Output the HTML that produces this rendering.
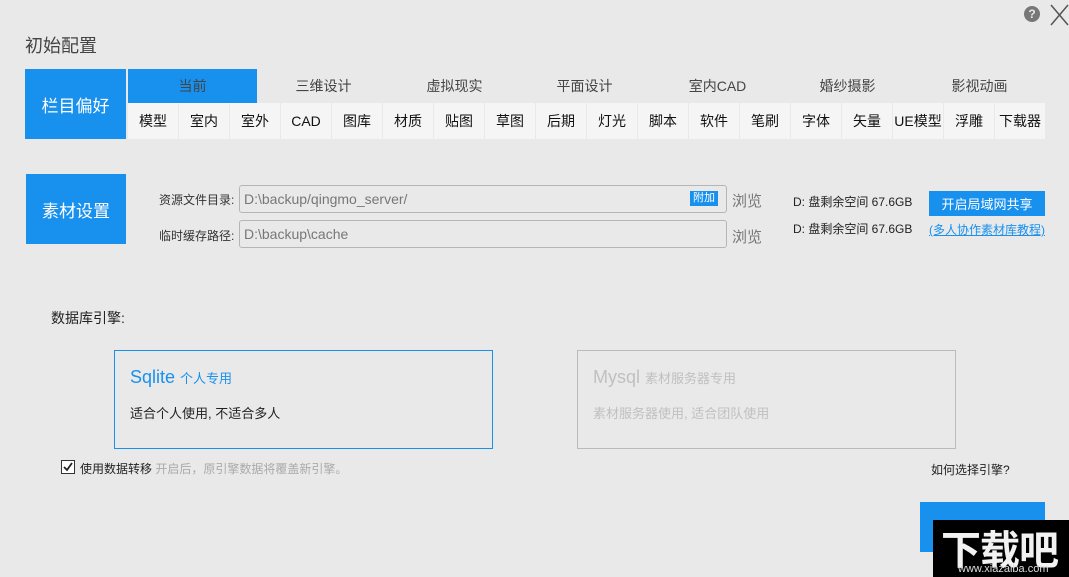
<!DOCTYPE html>
<html><head><meta charset="utf-8"><style>
*{margin:0;padding:0;box-sizing:border-box}
body{width:1069px;height:577px;background:#e9e9e9;position:relative;overflow:hidden;font-family:"Liberation Sans","Noto Sans CJK SC",sans-serif;color:#222}
.a{position:absolute}
.blue{background:#1890ee;color:#fff;display:flex;align-items:center;justify-content:center}
.tab{position:absolute;top:69px;height:34px;width:129px;display:flex;align-items:center;justify-content:center;font-size:14px;color:#444}
.sub{position:absolute;top:103px;left:128px;height:36px;display:flex}
.sub div{width:50px;margin-right:1px;background:#f5f5f5;display:flex;align-items:center;justify-content:center;font-size:14px;color:#111;white-space:nowrap}
.inp{position:absolute;left:239px;width:488px;height:28px;border:1px solid #b5b5b5;border-radius:3px;background:#e9e9e9;font-size:14px;color:#777;padding-left:4px;line-height:26px}
.lbl{position:absolute;font-size:13px;color:#333}
</style></head><body>
<div class="a" style="left:1024px;top:6px;width:16px;height:16px;border-radius:50%;background:#777;color:#e9e9e9;font-size:12px;font-weight:bold;text-align:center;line-height:16px">?</div>
<svg class="a" style="left:1050px;top:4px" width="19" height="22"><path d="M1 1L18 21M18 1L1 21" stroke="#555" stroke-width="1.5"/></svg>
<div class="a" style="left:25px;top:32px;font-size:18px;color:#444">初始配置</div>

<div class="a blue" style="left:25px;top:69px;width:101px;height:70px;font-size:17px">栏目偏好</div>
<div class="tab blue" style="left:128px;font-size:14px">当前</div>
<div class="tab" style="left:259px">三维设计</div>
<div class="tab" style="left:390px">虚拟现实</div>
<div class="tab" style="left:520px">平面设计</div>
<div class="tab" style="left:653px">室内CAD</div>
<div class="tab" style="left:783px">婚纱摄影</div>
<div class="tab" style="left:915px">影视动画</div>
<div class="sub"><div>模型</div><div>室内</div><div>室外</div><div>CAD</div><div>图库</div><div>材质</div><div>贴图</div><div>草图</div><div>后期</div><div>灯光</div><div>脚本</div><div>软件</div><div>笔刷</div><div>字体</div><div>矢量</div><div>UE模型</div><div>浮雕</div><div>下载器</div></div>

<div class="a blue" style="left:26px;top:174px;width:100px;height:70px;font-size:17px">素材设置</div>
<div class="lbl" style="left:159px;top:191px;font-size:12px">资源文件目录:</div>
<div class="lbl" style="left:159px;top:227px;font-size:12px">临时缓存路径:</div>
<div class="inp" style="top:185px">D:\backup/qingmo_server/<span class="a" style="right:8px;top:5px;background:#1890ee;color:#fff;font-size:11px;line-height:15px;padding:0 3px">附加</span></div>
<div class="inp" style="top:220px">D:\backup\cache</div>
<div class="lbl" style="left:732px;top:190px;font-size:15px;color:#777">浏览</div>
<div class="lbl" style="left:732px;top:226px;font-size:15px;color:#777">浏览</div>
<div class="lbl" style="left:793px;top:193px;font-size:12px;color:#222">D: 盘剩余空间 67.6GB</div>
<div class="lbl" style="left:793px;top:220px;font-size:12px;color:#222">D: 盘剩余空间 67.6GB</div>
<div class="a blue" style="left:929px;top:191px;width:116px;height:25px;font-size:13px">开启局域网共享</div>
<div class="lbl" style="left:929px;top:221px;font-size:12px;color:#1890ee;text-decoration:underline">(多人协作素材库教程)</div>

<div class="lbl" style="left:51px;top:308px;font-size:14px;color:#222">数据库引擎:</div>
<div class="a" style="left:114px;top:350px;width:379px;height:99px;border:1px solid #1890ee">
<div class="a" style="left:15px;top:16px;color:#1890ee;font-size:18px">Sqlite <span style="font-size:13px">个人专用</span></div>
<div class="a" style="left:15px;top:52px;font-size:13px;color:#222">适合个人使用, 不适合多人</div></div>
<div class="a" style="left:577px;top:350px;width:379px;height:99px;border:1px solid #bbb">
<div class="a" style="left:15px;top:16px;color:#c0c0c0;font-size:18px">Mysql <span style="font-size:13px">素材服务器专用</span></div>
<div class="a" style="left:15px;top:52px;font-size:13px;color:#c0c0c0">素材服务器使用, 适合团队使用</div></div>

<div class="a" style="left:61px;top:460px;width:14px;height:14px;border:1px solid #333;background:#fff"></div>
<svg class="a" style="left:62px;top:461px" width="12" height="12"><path d="M2 6L5 9L10 2" stroke="#222" stroke-width="1.8" fill="none"/></svg>
<div class="lbl" style="left:80px;top:460px;font-size:12px;color:#222">使用数据转移 <span style="color:#aaa">开启后，原引擎数据将覆盖新引擎。</span></div>
<div class="lbl" style="left:931px;top:461px;font-size:12px;color:#222">如何选择引擎?</div>

<div class="a blue" style="left:920px;top:502px;width:125px;height:50px;font-size:16px;align-items:flex-start;padding-top:14px">确定</div>
<div class="a" style="left:933px;top:520px;width:136px;height:57px;background:#000;color:#f2f2f2">
<div class="a" style="left:8px;top:-2px;font-size:40px;font-weight:bold;letter-spacing:-1px;font-family:'Noto Sans CJK SC',sans-serif">下载吧</div>
<div class="a" style="left:25px;top:43px;font-size:11px;color:#ddd">www.xiazaiba.com</div></div>
</body></html>
